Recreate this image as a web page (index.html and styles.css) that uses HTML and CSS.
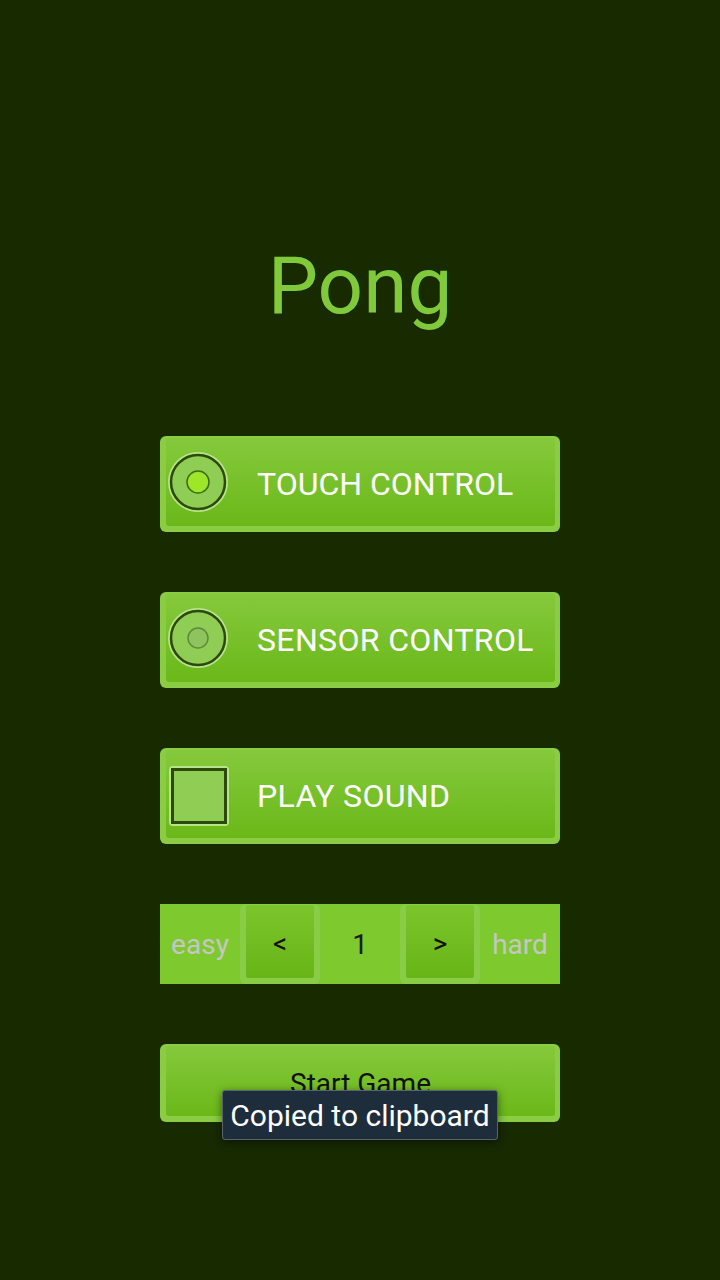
FILE: index.html
```html
<!DOCTYPE html>
<html>
<head>
<meta charset="utf-8">
<link rel="stylesheet" href="styles.css">
</head>
<body>
<main class="screen">
  <h1 class="title">Pong</h1>
  <div class="menu">
    <div class="btn">
      <div class="btn-inner">
        <svg class="mark" width="60" height="60" viewBox="0 0 60 60">
          <circle cx="30" cy="30" r="29" fill="#8fcd55" stroke="#b5e48a" stroke-width="2"/>
          <circle cx="30" cy="30" r="27" fill="none" stroke="#2d4a0c" stroke-width="2.5"/>
          <circle cx="30" cy="30" r="11" fill="#9ee62a" stroke="#3e6e14" stroke-width="1.5"/>
        </svg>
        <span class="label">TOUCH CONTROL</span>
      </div>
    </div>
    <div class="btn">
      <div class="btn-inner">
        <svg class="mark" width="60" height="60" viewBox="0 0 60 60">
          <circle cx="30" cy="30" r="29" fill="#8fcd55" stroke="#b5e48a" stroke-width="2"/>
          <circle cx="30" cy="30" r="27" fill="none" stroke="#2d4a0c" stroke-width="2.5"/>
          <circle cx="30" cy="30" r="10" fill="#8ec35e" stroke="#5d8c36" stroke-width="1.5"/>
        </svg>
        <span class="label label-wide">SENSOR CONTROL</span>
      </div>
    </div>
    <div class="btn">
      <div class="btn-inner">
        <svg class="mark mark-box" width="60" height="60" viewBox="0 0 60 60">
          <rect x="1" y="1" width="58" height="58" rx="3" fill="#8fcd55" stroke="#b5e48a" stroke-width="2"/>
          <rect x="3.5" y="3.5" width="53" height="53" fill="none" stroke="#2d4a0c" stroke-width="3"/>
        </svg>
        <span class="label label-wide">PLAY SOUND</span>
      </div>
    </div>
    <div class="level">
      <span class="level-text">easy</span>
      <div class="step"><div class="step-inner">&lt;</div></div>
      <span class="level-value">1</span>
      <div class="step"><div class="step-inner">&gt;</div></div>
      <span class="level-text">hard</span>
    </div>
    <div class="start">
      <div class="start-inner">Start Game</div>
      <div class="toast">Copied to clipboard</div>
    </div>
  </div>
</main>
</body>
</html>
```
FILE: styles.css
```css
html, body {
  margin: 0;
  padding: 0;
}
body {
  width: 720px;
  height: 1280px;
  background: #172a00;
  font-family: Roboto, "Noto Sans", sans-serif;
  overflow: hidden;
}
.screen {
  display: flex;
  flex-direction: column;
  align-items: center;
}
.title {
  margin: 246px 0 0;
  font-size: 80px;
  line-height: 80px;
  font-weight: 400;
  color: #7fc93a;
}
.menu {
  margin-top: 110px;
  width: 400px;
  display: flex;
  flex-direction: column;
  gap: 60px;
}
.btn {
  height: 96px;
  box-sizing: border-box;
  padding: 2px 5px 6px 6px;
  background: #8acd44;
  border-radius: 6px;
}
.btn-inner {
  height: 100%;
  border-radius: 3px;
  background: linear-gradient(#85c93c, #6bb819);
  display: flex;
  align-items: center;
}
.mark {
  margin-left: 2px;
  flex: none;
}
.mark-box {
  margin-left: 3px;
  margin-top: 4px;
}
.label {
  margin-left: 29px;
  padding-top: 3px;
  color: #ffffff;
  font-size: 32px;
}
.mark-box + .label {
  margin-left: 28px;
}
.label-wide {
  letter-spacing: 0.35px;
}
.level {
  height: 80px;
  background: #7ec92e;
  display: grid;
  grid-template-columns: repeat(5, 80px);
  align-items: center;
  justify-items: center;
}
.level-text {
  color: #c6c6c6;
  font-size: 28px;
}
.level-value {
  color: #1b1b1b;
  font-size: 28px;
}
.step {
  width: 80px;
  height: 80px;
  box-sizing: border-box;
  padding: 1px 6px 6px 6px;
  background: #88cd45;
  border-radius: 6px;
}
.step-inner {
  height: 100%;
  border-radius: 2px;
  background: linear-gradient(#7cc52c, #67b517);
  display: flex;
  align-items: center;
  justify-content: center;
  padding-top: 4px;
  box-sizing: border-box;
  color: #111;
  font-size: 28px;
}
.start {
  position: relative;
  height: 78px;
  box-sizing: border-box;
  padding: 2px 5px 6px 6px;
  background: #8acd44;
  border-radius: 6px;
}
.start-inner {
  height: 100%;
  box-sizing: border-box;
  padding-top: 5px;
  border-radius: 3px;
  background: linear-gradient(#85c93c, #6bb819);
  display: flex;
  align-items: center;
  justify-content: center;
  color: #111;
  font-size: 28px;
}
.toast {
  position: absolute;
  left: 62px;
  top: 46px;
  width: 276px;
  height: 50px;
  box-sizing: border-box;
  background: #1e2d3c;
  border: 1px solid #5a646e;
  border-radius: 3px;
  box-shadow: 0 2px 8px rgba(0, 0, 0, 0.5);
  color: #ffffff;
  font-size: 30px;
  display: flex;
  align-items: center;
  justify-content: center;
}
```
